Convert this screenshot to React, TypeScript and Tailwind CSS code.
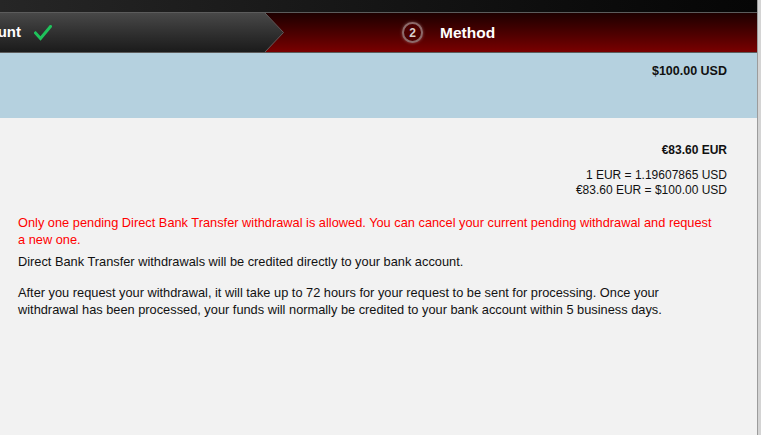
import React from 'react';

const CheckIcon: React.FC = () => (
  <svg width="18" height="16" viewBox="0 0 18 16" className="block">
    <polyline
      points="1.5,8 6.5,13.5 16.5,1.5"
      fill="none"
      stroke="#1fc25b"
      strokeWidth="3"
      strokeLinecap="square"
    />
  </svg>
);

const StepBar: React.FC = () => (
  <div className="relative h-[39px] flex bg-gradient-to-b from-[#1e0000] via-[#4a0000] to-[#7a0000]">
    {/* step 1, done */}
    <div className="relative w-[284px] h-full overflow-hidden bg-gradient-to-b from-[#484848] to-[#1b1b1b] [clip-path:polygon(0_0,265px_0,283px_50%,265px_100%,0_100%)]">
      <div className="flex items-center h-full">
        <span className="ml-[-39px] text-[15px] font-bold text-white whitespace-nowrap">Account</span>
        <span className="ml-[13px] mt-[1px]">
          <CheckIcon />
        </span>
      </div>
    </div>
    <svg className="absolute left-[264px] top-0" width="21" height="39" viewBox="0 0 21 39">
      <polyline points="1,0 19.5,19.5 1,39" fill="none" stroke="#5e5e5e" strokeWidth="1" />
    </svg>
    {/* step 2, current */}
    <div className="flex items-center ml-[118px]">
      <div className="w-[21px] h-[21px] rounded-full border-2 border-[#8c6a6a] bg-[#4a0000] shadow-[0_0_3px_rgba(255,255,255,0.35)] flex items-center justify-center">
        <span className="text-[12px] font-bold text-[#d8d0d0] leading-none">2</span>
      </div>
      <span className="ml-[17px] text-[15.5px] font-bold text-white">Method</span>
    </div>
  </div>
);

export default function App() {
  return (
    <div className="flex w-[761px] h-[435px] overflow-hidden bg-[#f2f2f2] font-['Liberation_Sans',Arial,sans-serif] text-[#111]">
      <div className="flex-1 flex flex-col">
        <div className="h-[12px] bg-gradient-to-r from-[#262626] to-[#060606]" />
        <div className="h-px bg-[#5c5c5c]" />
        <StepBar />
        <div className="h-px bg-[#5c5c5c]" />

        <div className="h-[65px] bg-[#b5d1df] pt-[11px] pr-[30px] text-right">
          <div className="text-[12.5px] font-bold leading-[15px]">$100.00 USD</div>
        </div>

        <div className="pt-[25px] pr-[30px] text-right text-[12px] leading-[15px]">
          <div className="font-bold">€83.60 EUR</div>
          <div className="mt-[10px]">1 EUR = 1.19607865 USD</div>
          <div>€83.60 EUR = $100.00 USD</div>
        </div>

        <div className="pl-[18px] w-[718px] mt-[16px] text-[12.8px] leading-[17px]">
          <p className="text-[#f00]">
            Only one pending Direct Bank Transfer withdrawal is allowed. You can cancel your current pending
            withdrawal and request a new one.
          </p>
          <p className="mt-[5px]">Direct Bank Transfer withdrawals will be credited directly to your bank account.</p>
          <p className="mt-[14px]">
            After you request your withdrawal, it will take up to 72 hours for your request to be sent for
            processing. Once your withdrawal has been processed, your funds will normally be credited to your bank
            account within 5 business days.
          </p>
        </div>
      </div>
      <div className="w-[4px] border-l border-[#9c9c9c] bg-[#d4d4d4]" />
    </div>
  );
}
